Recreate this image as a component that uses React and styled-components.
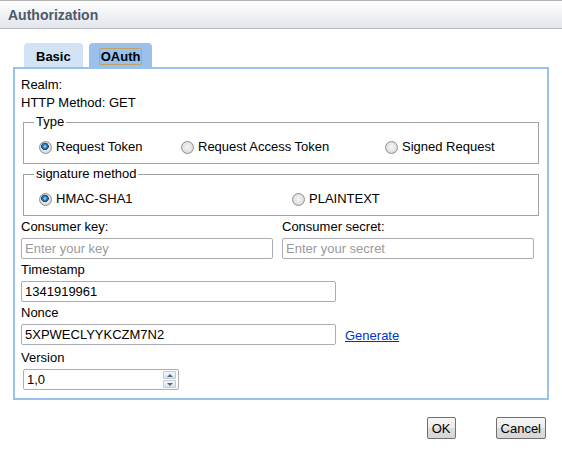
import React from "react";
import styled, { createGlobalStyle } from "styled-components";

const GlobalStyle = createGlobalStyle`
  html, body { margin: 0; padding: 0; background: #fff; }
  body {
    font-family: "Liberation Sans", Arial, sans-serif;
    font-size: 13px;
    color: #000;
  }
`;

const Dialog = styled.div`
  width: 562px;
  height: 454px;
  background: #fff;
`;

const TitleBar = styled.div`
  height: 29px;
  box-sizing: border-box;
  border-top: 1px solid #b4b4b4;
  border-bottom: 1px solid #b9bcc2;
  background: linear-gradient(#fefefe, #e2e5eb);
  display: flex;
  align-items: center;
  padding-left: 8px;
  font-weight: bold;
  font-size: 14px;
  color: #4e586b;
`;

const TabRow = styled.div`
  display: flex;
  gap: 6px;
  margin: 14px 0 0 24px;
`;

const Tab = styled.div`
  height: 24px;
  box-sizing: border-box;
  padding: 0 10px 2px;
  border-radius: 4px 4px 0 0;
  background: ${(p) => (p.$active ? "#99c1ec" : "#d1e3f5")};
  display: flex;
  align-items: flex-end;
  font-weight: bold;
  font-size: 13px;
  cursor: default;
`;

const TabLabel = styled.span`
  border: 1px solid ${(p) => (p.$focused ? "#c4a164" : "transparent")};
  border-radius: 2px;
  padding: 0 1px;
  line-height: 15px;
`;

const Panel = styled.div`
  margin-left: 13px;
  width: 536px;
  box-sizing: border-box;
  border: 2px solid #99c1ec;
  padding: 7px 6px 8px;
`;

const InfoLine = styled.div`
  line-height: 18px;
`;

const Group = styled.fieldset`
  margin: 1px 2px 0;
  padding: 7px 12px 7px 10px;
  border: 1px solid #a3a3a3;
  min-width: 0;
`;

const Legend = styled.legend`
  padding: 0 2px;
  line-height: 18px;
  font-size: 13px;
`;

const RadioGrid = styled.div`
  display: grid;
  grid-template-columns: ${(p) => p.$cols};
  margin-left: 5px;
  align-items: center;
  line-height: 18px;
`;

const RadioLabel = styled.label`
  display: flex;
  align-items: center;
  gap: 4px;
  white-space: nowrap;
`;

const Radio = styled.input.attrs({ type: "radio" })`
  appearance: none;
  -webkit-appearance: none;
  margin: 0;
  width: 13px;
  height: 13px;
  box-sizing: border-box;
  border-radius: 50%;
  border: 1px solid #8e8f8f;
  background: radial-gradient(circle at 50% 45%, #f6f6f6 0, #e2e2e2 55%, #c9c9c9 100%);
  &:checked {
    background:
      radial-gradient(circle at 45% 40%, #b8e4ff 0, #3f8fd6 1.6px, #1a4f86 3.2px, #234a70 3.6px, transparent 4px),
      radial-gradient(circle at 50% 45%, #f6f6f6 0, #e2e2e2 55%, #c9c9c9 100%);
  }
`;

const FieldLabel = styled.div`
  line-height: 18px;
  margin-top: ${(p) => p.$top ?? 2}px;
`;

const TextInput = styled.input.attrs({ type: "text" })`
  display: block;
  box-sizing: border-box;
  height: 21px;
  width: ${(p) => p.$width}px;
  margin: 2px 0 0;
  border: 1px solid #abadb3;
  border-radius: 2px;
  padding: 0 3px;
  font-family: "Liberation Sans", Arial, sans-serif;
  font-size: 13px;
  color: #000;
  outline: none;
  &::placeholder { color: #9a9a9a; }
`;

const PairGrid = styled.div`
  display: grid;
  grid-template-columns: 252px 252px;
  column-gap: 9px;
`;

const InlineRow = styled.div`
  display: flex;
  align-items: center;
  gap: 9px;
`;

const Link = styled.a`
  color: #0033cc;
  text-decoration: underline;
  line-height: 18px;
  margin-top: 4px;
  cursor: pointer;
`;

const SpinBox = styled.div`
  display: flex;
  align-items: center;
  width: 156px;
  height: 21px;
  box-sizing: border-box;
  margin: 2px 0 0 2px;
  border: 1px solid #abadb3;
  border-radius: 2px;
  padding: 0 2px 0 3px;
`;

const SpinInput = styled.input.attrs({ type: "text" })`
  flex: 1;
  min-width: 0;
  border: none;
  outline: none;
  padding: 0;
  background: transparent;
  font-family: "Liberation Sans", Arial, sans-serif;
  font-size: 13px;
  color: #000;
`;

const Stepper = styled.div`
  display: flex;
  flex-direction: column;
  gap: 1px;
  width: 13px;
`;

const StepButton = styled.div`
  height: 8px;
  box-sizing: border-box;
  border: 1px solid #c3cad3;
  border-radius: 1px;
  background: linear-gradient(#f4f6f9, #dde3ea);
  display: flex;
  align-items: center;
  justify-content: center;
`;

const Arrow = styled.span`
  width: 0;
  height: 0;
  border-left: 3px solid transparent;
  border-right: 3px solid transparent;
  ${(p) =>
    p.$dir === "up"
      ? "border-bottom: 3px solid #4d6a8e;"
      : "border-top: 3px solid #4d6a8e;"}
`;

const ButtonRow = styled.div`
  display: flex;
  justify-content: flex-end;
  gap: 40px;
  margin-top: 17px;
  padding-right: 16px;
`;

const Button = styled.button`
  height: 22px;
  box-sizing: border-box;
  padding: 0 4px;
  border: 1px solid #707070;
  border-radius: 2px;
  background: linear-gradient(#f6f6f6 0%, #ececec 50%, #dddddd 51%, #d6d6d6 100%);
  font-family: "Liberation Sans", Arial, sans-serif;
  font-size: 13px;
  color: #000;
  cursor: pointer;
`;

export default function App() {
  return (
    <>
      <GlobalStyle />
      <Dialog>
        <TitleBar>Authorization</TitleBar>
        <TabRow>
          <Tab>
            <TabLabel>Basic</TabLabel>
          </Tab>
          <Tab $active>
            <TabLabel $focused>OAuth</TabLabel>
          </Tab>
        </TabRow>
        <Panel>
          <InfoLine>Realm:</InfoLine>
          <InfoLine>HTTP Method: GET</InfoLine>
          <Group>
            <Legend>Type</Legend>
            <RadioGrid $cols="142px 204px 1fr">
              <RadioLabel>
                <Radio name="type" defaultChecked /> Request Token
              </RadioLabel>
              <RadioLabel>
                <Radio name="type" /> Request Access Token
              </RadioLabel>
              <RadioLabel>
                <Radio name="type" /> Signed Request
              </RadioLabel>
            </RadioGrid>
          </Group>
          <Group>
            <Legend>signature method</Legend>
            <RadioGrid $cols="253px 1fr">
              <RadioLabel>
                <Radio name="sig" defaultChecked /> HMAC-SHA1
              </RadioLabel>
              <RadioLabel>
                <Radio name="sig" /> PLAINTEXT
              </RadioLabel>
            </RadioGrid>
          </Group>
          <PairGrid>
            <div>
              <FieldLabel>Consumer key:</FieldLabel>
              <TextInput $width={252} placeholder="Enter your key" />
            </div>
            <div>
              <FieldLabel>Consumer secret:</FieldLabel>
              <TextInput $width={252} placeholder="Enter your secret" />
            </div>
          </PairGrid>
          <FieldLabel>Timestamp</FieldLabel>
          <TextInput $width={315} defaultValue="1341919961" />
          <FieldLabel>Nonce</FieldLabel>
          <InlineRow>
            <TextInput $width={315} defaultValue="5XPWECLYYKCZM7N2" />
            <Link>Generate</Link>
          </InlineRow>
          <FieldLabel $top={4}>Version</FieldLabel>
          <SpinBox>
            <SpinInput defaultValue="1,0" />
            <Stepper>
              <StepButton>
                <Arrow $dir="up" />
              </StepButton>
              <StepButton>
                <Arrow $dir="down" />
              </StepButton>
            </Stepper>
          </SpinBox>
        </Panel>
        <ButtonRow>
          <Button>OK</Button>
          <Button>Cancel</Button>
        </ButtonRow>
      </Dialog>
    </>
  );
}
